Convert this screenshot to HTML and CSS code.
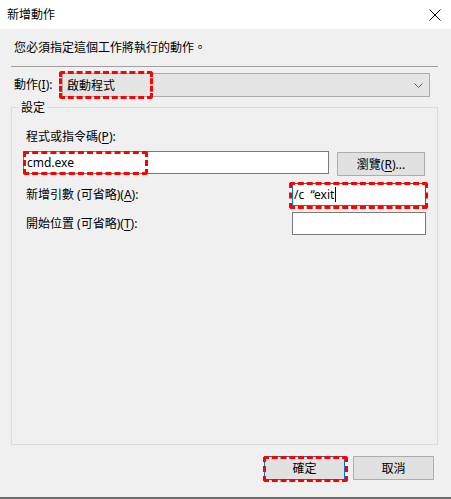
FILE: index.html
```html
<!DOCTYPE html>
<html lang="zh-Hant">
<head>
    <meta charset="UTF-8">
    <title>新增動作</title>
    <link rel="stylesheet" href="styles.css">
</head>
<body>
    <div class="window">
        <div class="titlebar">
            <span class="title">新增動作</span>
            <svg class="close" width="12" height="12" viewBox="0 0 12 12">
                <path d="M0.5 0.5 L11.5 11.5 M11.5 0.5 L0.5 11.5" stroke="#000" stroke-width="1" fill="none"/>
            </svg>
        </div>

        <div class="main">
            <div class="intro">您必須指定這個工作將執行的動作。</div>
            <div class="separator"></div>

            <div class="action-row">
                <span class="action-label">動作(<u>I</u>):</span>
                <div class="combo">
                    <span>啟動程式</span>
                    <svg class="chevron" width="9" height="5" viewBox="0 0 9 5">
                        <path d="M0.5 0.5 L4.5 4.5 L8.5 0.5" stroke="#5a5a5a" stroke-width="1" fill="none"/>
                    </svg>
                    <span class="mark mark-combo"></span>
                </div>
            </div>

            <fieldset class="settings">
                <legend>設定</legend>

                <div class="field-label">程式或指令碼(<u>P</u>):</div>
                <div class="path-row">
                    <div class="textbox path-box">
                        <span>cmd.exe</span>
                        <span class="mark mark-path"></span>
                    </div>
                    <button class="btn browse">瀏覽(<u>R</u>)...</button>
                </div>

                <div class="pair-row first">
                    <span class="row-label">新增引數 (可省略)(<u>A</u>):</span>
                    <div class="textbox side-box focused">
                        <span>/c &nbsp;“exit</span><span class="caret"></span>
                        <span class="mark mark-args"></span>
                    </div>
                </div>

                <div class="pair-row">
                    <span class="row-label">開始位置 (可省略)(<u>T</u>):</span>
                    <div class="textbox side-box"></div>
                </div>
            </fieldset>
        </div>

        <div class="footer">
            <button class="btn dialog-btn default">確定<span class="mark mark-ok"></span></button>
            <button class="btn dialog-btn">取消</button>
        </div>
    </div>
</body>
</html>
```

FILE: styles.css
```css
* { box-sizing: border-box; }
body { margin: 0; font-family: "Noto Sans", "Noto Sans CJK TC", sans-serif; font-size: 12px; color: #000; }
u { text-decoration-thickness: 1px; text-underline-offset: 2px; }

.window {
    width: 451px; height: 499px;
    background: #f0f0f0;
    display: flex; flex-direction: column;
    border-bottom: 2px solid #6e6e6e;
}

.titlebar {
    height: 29px; background: #fff;
    display: flex; align-items: center; justify-content: space-between;
    padding: 0 10px 0 7px;
}
.title { line-height: 29px; }
.close { display: block; margin-top: 1px; }

.main { flex: 1; display: flex; flex-direction: column; padding: 0 13px 0 11px; }
.intro { margin: 10px 0 0 3px; line-height: 18px; }
.separator { margin-top: 9px; height: 1px; background: #a0a0a0; }

.action-row { display: flex; align-items: center; margin-top: 6px; }
.action-label { width: 51px; padding-left: 3px; line-height: 16px; }
.combo {
    position: relative;
    width: 368px; height: 24px;
    background: #e5e5e5; border: 1px solid #adadad;
    display: flex; align-items: center; justify-content: space-between;
    padding: 0 6px 0 4px;
}
.chevron { display: block; }

.settings {
    flex: 1; margin: 3px 0 0; padding: 0 11px 0 11px;
    border: 1px solid #dcdcdc; min-width: 0;
}
.settings legend { margin-left: -4px; padding: 0 2px; line-height: 15px; }

.field-label { margin: 14px 0 0 3px; line-height: 16px; }
.path-row { display: flex; align-items: flex-start; margin-top: 6px; }
.textbox {
    position: relative;
    height: 23px; background: #fff; border: 1px solid #7a7a7a;
    display: flex; align-items: center; padding-left: 3px;
    line-height: 16px;
}
.path-box { width: 306px; }
.btn {
    font: inherit; color: #000;
    background: #e1e1e1; border: 1px solid #adadad;
    height: 24px; padding: 0;
    position: relative;
}
.browse { width: 88px; margin: 1px 0 0 8px; }

.pair-row { display: flex; align-items: center; justify-content: space-between; margin-top: 6px; padding-left: 3px; }
.pair-row.first { margin-top: 7px; }
.row-label { line-height: 16px; }
.side-box { width: 134px; }
.focused { border-color: #0078d7; padding-left: 1px; }
.caret { display: inline-block; width: 1px; height: 15px; background: #000; margin-left: 1px; }

.footer {
    height: 52px; display: flex; justify-content: flex-end; align-items: flex-start;
    gap: 8px; padding: 11px 17px 0 0;
}
.dialog-btn { width: 81px; }
.default { border-color: #0078d7; }

.mark {
    position: absolute;
    border: 3px dashed #ff0000; border-radius: 3px;
}
.mark-combo { left: -4px; top: -3px; width: 94px; height: 28px; }
.mark-path { left: -1px; top: -1px; width: 125px; height: 24px; }
.mark-args { left: -4px; top: -2px; width: 139px; height: 27px; }
.mark-ok { left: -2px; top: -1px; width: 85px; height: 26px; }
```
